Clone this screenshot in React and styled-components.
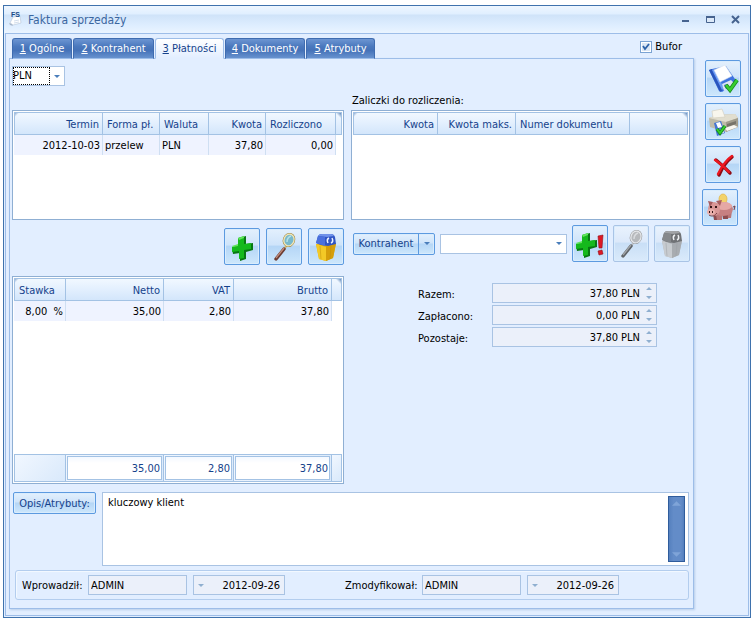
import React from "react";
import styled, { createGlobalStyle, css } from "styled-components";

const color = {
  window: "#3f72ad",
  panel: "#e2eeff",
  line: "#9dbde8",
  grid: "#8fafd3",
  cell: "#a3c2e4",
  field: "#a9c3e3",
  readOnly: "#ebf0fa",
  navy: "#15428b",
  button: "#5c9ae0",
};

const GlobalStyle = createGlobalStyle`
  * {
    box-sizing: border-box;
  }

  body {
    margin: 0;
    background: #fff;
    color: #000;
  }

  body, button, input, select, textarea {
    font-family: "DejaVu Sans Condensed", "DejaVu Sans", sans-serif;
    font-size: 11px;
    line-height: 14px;
  }
`;

// WINDOW
const Window = styled.div`
  background: ${color.panel};
  border: 1px solid ${color.window};
  margin: 5px 5px 2px 3px;
  padding: 0 1px 1px;
`;

const TitleBar = styled.header`
  align-items: center;
  background: linear-gradient(#eef6ff 0, #e0efff 8px, #cfe3f9 9px, #dfeeff 20px, #eaf4ff 27px);
  display: flex;
  height: 27px;
  margin: 0 -1px;
  padding: 0 7px 0 5px;
`;

const Title = styled.h1`
  color: #3b669f;
  flex: 1;
  font-size: 12px;
  font-weight: normal;
  line-height: 16px;
  margin: 0;
  padding-left: 4px;
`;

const WindowButton = styled.button`
  background: none;
  border: 0;
  display: flex;
  margin-left: 10px;
  padding: 2px;
`;

const Body = styled.div`
  border: 1px solid ${color.line};
  display: flex;
  padding: 4px 0 6px 3px;
`;

const Main = styled.div`
  flex: 1;
  min-width: 0;
`;

// TABS
const TabBar = styled.div`
  display: flex;
  justify-content: space-between;
  padding: 0 12px 0 3px;
`;

const Tabs = styled.div`
  display: flex;
  gap: 1px;
  margin-bottom: -1px;
`;

const Tab = styled.button`
  background: linear-gradient(#6c95d2, #4a78bd 40%, #4572b8 60%, #6792cf);
  border: 1px solid #3f6cb0;
  border-bottom: 1px solid ${color.line};
  border-radius: 3px 3px 0 0;
  color: #fff;
  height: 21px;
  padding: 1px 0 0;
  text-align: center;
  white-space: nowrap;
  width: ${props => props.$width}px;

  ${props => props.$active && css`
    background: linear-gradient(#fff, ${color.panel});
    border-color: ${color.line};
    border-bottom-color: ${color.panel};
    color: ${color.navy};
    position: relative;
  `}
`;

const Check = styled.label`
  align-items: center;
  display: flex;
  gap: 3px;
  height: 18px;

  input {
    appearance: none;
    background: #fff;
    border: 1px solid #7ba3d3;
    box-shadow: inset 0 0 0 1px #fff, inset 0 0 0 9px #dbe7f5;
    grid-area: 1 / 1;
    height: 12px;
    margin: 0;
    width: 12px;
  }

  span {
    display: grid;
    place-items: center;
  }

  svg {
    grid-area: 1 / 1;
    pointer-events: none;
    z-index: 1;
  }
`;

const Panel = styled.main`
  border: 1px solid ${color.line};
  box-shadow: 1px 1px 2px #b7cdea;
  padding: 7px 3px 8px 2px;
`;

const Columns = styled.div`
  display: grid;
  gap: 7px;
  grid-template-columns: minmax(0, 332fr) minmax(0, 339fr);
`;

const Column = styled.div`
  display: flex;
  flex-direction: column;
`;

// FIELDS
const Combo = styled.div`
  background: #fff;
  border: 1px solid ${color.field};
  display: grid;
  grid-template-columns: 1fr 14px;
  height: 20px;
  align-items: center;
  ${props => props.$width ? `width: ${props.$width}px;` : "flex: 1;"}

  select {
    appearance: none;
    background: none;
    border: 0;
    grid-area: 1 / 1 / 2 / 3;
    height: 18px;
    margin-right: 14px;
    outline: ${props => props.$focused ? "1px dotted #000" : "0"};
    outline-offset: -1px;
    padding: 0;
  }

  svg {
    grid-area: 1 / 2;
    justify-self: center;
    pointer-events: none;
  }
`;

const CurrencyBar = styled.div`
  display: flex;
  margin-bottom: 24px;
`;

const ReadOnly = styled.div`
  align-items: center;
  background: ${color.readOnly};
  border: 1px solid ${color.field};
  display: flex;
  height: 20px;
  padding: 0 4px 0 2px;
  width: ${props => props.$width}px;

  input {
    background: none;
    border: 0;
    flex: 1;
    height: 18px;
    min-width: 0;
    padding: 0;
    text-align: ${props => props.$right ? "right" : "left"};
  }
`;

// GRIDS
const GridBox = styled.div`
  background: #fff;
  border: 1px solid ${color.grid};
  min-height: ${props => props.$height}px;
  padding: 1px;
`;

const Table = styled.table`
  border-collapse: separate;
  border-spacing: 0;
  table-layout: fixed;
  width: 100%;

  th, td {
    overflow: hidden;
    text-align: left;
    white-space: pre;
  }

  th {
    background: linear-gradient(#f1f8ff, #e4f0fe 45%, #d3e6fb);
    border: 1px solid ${color.cell};
    border-left-width: 0;
    color: ${color.navy};
    font-weight: normal;
    height: 23px;
    padding: 2px 3px 0 4px;
  }

  th:first-child {
    background: linear-gradient(135deg, #8fabd0 0, #e4f0fe00 3px), linear-gradient(#f1f8ff, #e4f0fe 45%, #d3e6fb);
    border-left-width: 1px;
  }

  th:last-child {
    background: linear-gradient(225deg, #5f86b8 0, #e4f0fe00 4px), linear-gradient(#f1f8ff, #e4f0fe 45%, #d3e6fb);
  }

  tbody td {
    background: #eff3ff;
    border-right: 1px solid #cfdff2;
    height: 20px;
    padding: 2px 2px 0;
  }

  tbody td:last-child {
    background: #fff;
    border: 0;
  }

  tbody tr.space td {
    height: 133px;
  }

  th.right, td.right {
    text-align: right;
  }
`;

const FootCell = styled.td`
  background: linear-gradient(135deg, #f1f7ff, #d9e9fb);
  border: 1px solid ${color.cell};
  border-left-width: ${props => props.$first ? 1 : 0}px;
  height: 28px;
  padding: ${props => props.$sum ? 1 : 0}px;
`;

const Sum = styled.div`
  background: linear-gradient(#f3f8ff, #fff 6px);
  border: 1px solid ${color.cell};
  color: ${color.navy};
  height: 24px;
  line-height: 24px;
  padding-right: 1px;
  text-align: right;
`;

// BUTTONS
const glass = css`
  background: linear-gradient(#e3f0fd, #cfe4fa 45%, #b5d6f6 50%, #cde7fc);
  border: 1px solid ${color.button};
  border-radius: 2px;
  box-shadow: inset 0 0 0 1px #d9ecfd;
`;

const IconButton = styled.button`
  ${glass}
  align-items: center;
  display: flex;
  flex: none;
  height: 37px;
  justify-content: center;
  padding: 0;
  width: 36px;
  ${props => props.$start && "align-self: flex-start;"}

  &:disabled {
    border-color: #a9c4e6;
    background: linear-gradient(#e9f2fd, #dce9fa 45%, #c9dff6 50%, #daeafb);
  }

  &:disabled svg {
    filter: grayscale(1);
    opacity: 0.8;
  }
`;

const TextButton = styled.button`
  ${glass}
  color: ${color.navy};
  flex: none;
  height: 22px;
  padding: 1px 0 0;
  white-space: nowrap;
  width: ${props => props.$width}px;
`;

const SplitButton = styled.div`
  ${glass}
  display: flex;
  flex: none;
  height: 22px;
  width: 82px;

  button {
    align-items: center;
    background: none;
    border: 0;
    color: ${color.navy};
    display: flex;
    justify-content: center;
    padding: 0;
  }

  button:first-child {
    flex: 1;
  }

  button:last-child {
    border-left: 1px solid ${color.button};
    width: 16px;
  }
`;

const ButtonRow = styled.div`
  display: flex;
  gap: 6px;
  justify-content: flex-end;
  margin: 8px 0 11px;
`;

const AdvanceRow = styled.div`
  align-items: center;
  display: flex;
  gap: 5px;
  margin: 5px 0 21px;
  padding-left: 2px;
`;

const GridLabel = styled.div`
  line-height: 16px;
  margin: 27px 0 1px;
  padding-left: 1px;
`;

const Totals = styled.div`
  display: grid;
  row-gap: 2px;
  grid-template-columns: 74px 165px;
  justify-content: end;
  padding-right: 33px;

  label {
    line-height: 24px;
    height: 20px;
  }
`;

const Description = styled.div`
  display: flex;
  gap: 6px;
  padding: 8px 1px 0;
`;

const TextBox = styled.div`
  background: #fff;
  border: 1px solid ${color.field};
  display: flex;
  flex: 1;
  height: 74px;
  padding: 3px;

  textarea {
    border: 0;
    flex: 1;
    outline: 0;
    overflow: hidden;
    padding: 0 2px;
    resize: none;
  }
`;

const ScrollBar = styled.div`
  align-items: center;
  background: linear-gradient(90deg, #5580be, #638cc8 30%, #638cc8 80%, #5580be);
  border: 1px solid #2f5c9c;
  display: flex;
  flex-direction: column;
  justify-content: space-between;
  padding: 4px 0;
  width: 17px;
`;

const Audit = styled.div`
  align-items: center;
  border: 1px solid #b3cdee;
  border-radius: 3px;
  box-shadow: inset 1px 1px 1px #f4f9ff;
  display: flex;
  gap: 6px;
  height: 30px;
  margin: 4px 1px 0 3px;
  padding-left: 6px;

  label {
    padding-top: 1px;
    width: 60px;
  }

  label.modified {
    margin-left: 54px;
    width: 71px;
  }
`;

const SideBar = styled.aside`
  align-items: flex-end;
  display: flex;
  flex-direction: column;
  gap: 6px;
  padding: 22px 7px 0 8px;
  width: 54px;
`;

// ICONS
const Arrow = ({ up, fill = "#4a7ebb", size = 6 }) => (
  <svg width={size} height={Math.ceil(size / 2)} viewBox="0 0 6 3">
    <path d={up ? "M0 3h6L3 0z" : "M0 0h6L3 3z"} fill={fill} />
  </svg>
);

const Spinner = () => (
  <svg width="12" height="18" viewBox="0 0 12 18" fill="#8fafd0">
    <path d="M6 6h6L9 3zM6 12h6L9 15z" />
  </svg>
);

const FsIcon = () => (
  <svg width="15" height="17" viewBox="0 0 15 17">
    <path d="M4 6l7-1 1 7-8 2-3-2z" fill="#fff" stroke="#b6c4d8" strokeWidth=".6" />
    <path d="M0 12l3 1 1 2-3-1z" fill="#aab9cc" />
    <path d="M5 10l5-1M5 12l5-1" stroke="#d3deec" />
    <text x="2" y="6" fontFamily="Liberation Sans" fontSize="7" fontWeight="bold" fill="#1c4c86">FS</text>
  </svg>
);

const SaveIcon = () => (
  <svg width="32" height="32" viewBox="0 0 32 32">
    <path d="M2 7l3-1L19 3l11 16-15 10-3-1z" fill="#3f74e0" />
    <path d="M2 7l3-1 11 21-3 2z" fill="#2a55bd" />
    <path d="M5 7l2-1 10 19-2 2z" fill="#6b9bf6" />
    <path d="M7 7l11-5 7 11-12 6z" fill="#fff" stroke="#d5e0f0" strokeWidth=".6" />
    <path d="M15 21l9-4 4 4-11 7z" fill="#dce4f2" />
    <path d="M17 22l3-1 2 4-3 1z" fill="#2b57b8" />
    <path d="M19 22l4 5 7-10" fill="none" stroke="#178a1b" strokeWidth="4" />
    <path d="M19 22l4 5 7-10" fill="none" stroke="#38ce2f" strokeWidth="2.400" />
  </svg>
);

const PrinterIcon = () => (
  <svg width="32" height="32" viewBox="0 0 32 32">
    <path d="M2 12l8-3 18-1 3 4v9l-12 5-16-5z" fill="#bfbba9" />
    <path d="M2 12l8-3 18-1 3 4-12 4z" fill="#e1decf" />
    <path d="M5 5l10-2 3 8-12 1z" fill="#f8f6ed" stroke="#d1cdbc" strokeWidth=".6" />
    <path d="M19 16l12-4v9l-12 5z" fill="#a19d8d" />
    <path d="M20 18l9-3v3l-9 3z" fill="#77746a" />
    <path d="M18 22l9-3 4 2-11 4z" fill="#f9f8f1" />
    <path d="M7 17l7-2 4 12-8 3z" fill="#4474d4" />
    <path d="M9 17l4-1 2 5-4 1z" fill="#fff" />
    <path d="M11 24l5-1 1 4-5 1z" fill="#e4ebf6" />
    <path d="M10 23l3 4 5-7" fill="none" stroke="#168b1b" strokeWidth="3.400" />
    <path d="M10 23l3 4 5-7" fill="none" stroke="#37cf2d" strokeWidth="1.700" />
  </svg>
);

const CrossIcon = () => (
  <svg width="32" height="32" viewBox="0 0 32 32" fill="none">
    <path d="M9 11c4 3 9 8 14 13M25 8c-5 4-10 11-13 18" stroke="#8d0b14" strokeWidth="3.400" strokeLinecap="round" />
    <path d="M8 11c4 2 9 7 14 12M25 7c-6 4-11 12-14 18" stroke="#ed171f" strokeWidth="2.400" strokeLinecap="round" />
  </svg>
);

const PigIcon = () => (
  <svg width="34" height="34" viewBox="0 0 34 34">
    <ellipse cx="20" cy="8" rx="4" ry="5" fill="#f3d36a" stroke="#dfb548" strokeWidth=".7" />
    <path d="M10 23h5v6h-4zM19 22h7l-1 6h-5z" fill="#8d4c4f" />
    <path d="M13 24h6v5h-5zM24 20h5l-1 7h-3z" fill="#b97677" />
    <ellipse cx="20" cy="18" rx="10" ry="7" fill="#c78081" />
    <ellipse cx="21" cy="15" rx="8" ry="4" fill="#e5a8a5" />
    <ellipse cx="11" cy="18" rx="6" ry="7" fill="#d99796" />
    <path d="M5 10l5 1-3 5zM13 10l6-1-2 6z" fill="#a75d60" />
    <ellipse cx="8" cy="21" rx="4" ry="3" fill="#e9afab" />
    <path d="M7 15h2v2H7zM12 15h2v2h-2zM6 20h1v2H6zM9 20h1v2H9z" fill="#361618" />
    <path d="M6 24c3 2 6 1 8-2M30 16l2-1-1 4" fill="none" stroke="#793d42" />
  </svg>
);

const PlusIcon = ({ alert }) => (
  <svg width="32" height="32" viewBox="0 0 32 32">
    <g transform={alert ? "translate(-3 -1)" : "translate(1 -1)"}>
      <path d="M12 8l7-2v8l7-1v7l-7 2v7l-6 2v-8l-7 1-1-6 7-2z" fill="#087713" />
      <path d="M11 8l6-2v8l7-1v6l-7 1v8l-5 1v-8l-7 1v-5l6-2z" fill="#15b91c" />
      <path d="M11 8l6-2v2l-5 2zM5 16l6-2v2l-5 1z" fill="#61e45b" />
    </g>
    {alert && <path d="M24 8l5-1-1 13h-3zM24 23l4-1 1 4-4 1z" fill="#dc1823" stroke="#930d18" strokeWidth=".6" />}
  </svg>
);

const LensIcon = () => (
  <svg width="32" height="32" viewBox="0 0 32 32">
    <path d="M16 18l4-5" stroke="#cfbb72" strokeWidth="2" />
    <path d="M8 28l8-10" stroke="#6b3b31" strokeWidth="3.400" strokeLinecap="round" />
    <path d="M8 27l8-10" stroke="#c08c7c" strokeWidth="1.300" />
    <ellipse cx="21" cy="9" rx="5" ry="6" transform="rotate(20 21 9)" fill="#79b9cb" stroke="#9b853f" strokeWidth="2.400" />
    <ellipse cx="21" cy="9" rx="5" ry="6" transform="rotate(20 21 9)" fill="#79b9cb" stroke="#f3e7b8" strokeWidth="1.300" />
    <path d="M19 11c0-3 1-5 4-6" fill="none" stroke="#b5e1e7" strokeWidth="1.500" />
  </svg>
);

const BinIcon = () => (
  <svg width="32" height="32" viewBox="0 0 32 32">
    <path d="M6 13h20l-3 14-7 3-7-2z" fill="#dfab0e" />
    <path d="M6 13l10 3v14l-7-2z" fill="#f3c926" />
    <path d="M16 15l10-3-3 15-7 3z" fill="#d59e0b" />
    <path d="M10 15l1 13M21 15l-1 13" stroke="#bd8d0c" strokeWidth=".8" opacity=".6" />
    <path d="M6 12l2-7q1-2 4-2h9q3 0 4 3l1 7-8 2-7-1z" fill="#2f55c4" />
    <path d="M8 5q1-2 4-2h9q2 0 3 2l-7 1z" fill="#6f92ea" />
    <path d="M6 12l2-7 7 1v9z" fill="#4a70dd" />
    <path d="M19 7c-2 1-2 3-1 5M21 12c2-1 2-3 1-5" fill="none" stroke="#eef3ff" strokeWidth="1.500" />
  </svg>
);

const tabs = [
  { key: "1", name: "Ogólne", width: 60 },
  { key: "2", name: "Kontrahent", width: 81 },
  { key: "3", name: "Płatności", width: 69, active: true },
  { key: "4", name: "Dokumenty", width: 80 },
  { key: "5", name: "Atrybuty", width: 69 },
];

const totals = [
  { id: "razem", label: "Razem:", value: "37,80 PLN" },
  { id: "zaplacono", label: "Zapłacono:", value: "0,00 PLN" },
  { id: "pozostaje", label: "Pozostaje:", value: "37,80 PLN" },
];

const paymentColumns = [
  { name: "Termin", width: 89, right: true },
  { name: "Forma pł.", width: 57 },
  { name: "Waluta", width: 49 },
  { name: "Kwota", width: 57, right: true },
  { name: "Rozliczono", width: 70, rightCell: true },
  { name: "", width: 6 },
];

const advanceColumns = [
  { name: "Kwota", width: 85, right: true },
  { name: "Kwota maks.", width: 78, right: true },
  { name: "Numer dokumentu", width: 114 },
  { name: "", width: 58 },
];

const vatColumns = [
  { name: "Stawka", width: 52, rightCell: true },
  { name: "Netto", width: 98, right: true },
  { name: "VAT", width: 70, right: true },
  { name: "Brutto", width: 98, right: true },
  { name: "", width: 10 },
];

const Grid = ({ columns, rows = [], sums, height }) => (
  <GridBox $height={height}>
    <Table>
      <colgroup>
        {columns.map((c, i) => <col key={i} width={c.width} />)}
      </colgroup>
      <thead>
        <tr>
          {columns.map((c, i) => (
            <th key={i} className={c.right ? "right" : ""}>{c.name}</th>
          ))}
        </tr>
      </thead>
      <tbody>
        {rows.map((row, r) => (
          <tr key={r}>
            {columns.map((c, i) => (
              <td key={i} className={c.right || c.rightCell ? "right" : ""}>{row[i]}</td>
            ))}
          </tr>
        ))}
        {sums && <tr className="space"><td colSpan={columns.length} /></tr>}
      </tbody>
      {sums && (
        <tfoot>
          <tr>
            {sums.map((sum, i) => (
              <FootCell key={i} $first={i === 0} $sum={!!sum}>
                {sum && <Sum>{sum}</Sum>}
              </FootCell>
            ))}
          </tr>
        </tfoot>
      )}
    </Table>
  </GridBox>
);

const DateField = ({ label, value }) => (
  <ReadOnly $width={92} $right>
    <svg width="9" height="5" viewBox="0 0 9 5"><path d="M2 1h6L5 4z" fill="#8fafd0" /></svg>
    <input readOnly aria-label={label} value={value} />
  </ReadOnly>
);

const App = () => (
  <>
    <GlobalStyle />
    <Window>
      <TitleBar>
        <FsIcon />
        <Title>Faktura sprzedaży</Title>
        <WindowButton aria-label="Minimalizuj">
          <svg width="11" height="9"><path d="M2 5h7v2H2z" fill="#46638f" /></svg>
        </WindowButton>
        <WindowButton aria-label="Maksymalizuj">
          <svg width="11" height="9"><path d="M1.500 1.500h8v6h-8z" fill="#dce9f8" stroke="#46638f" /><path d="M1 1h9v2H1z" fill="#46638f" /></svg>
        </WindowButton>
        <WindowButton aria-label="Zamknij">
          <svg width="11" height="9"><path d="M2 1l7 7M9 1L2 8" stroke="#46638f" strokeWidth="2" /></svg>
        </WindowButton>
      </TitleBar>
      <Body>
        <Main>
          <TabBar>
            <Tabs role="tablist">
              {tabs.map(t => (
                <Tab key={t.key} role="tab" aria-selected={!!t.active} $active={t.active} $width={t.width}>
                  <u>{t.key}</u> {t.name}
                </Tab>
              ))}
            </Tabs>
            <Check>
              <span>
                <input type="checkbox" defaultChecked />
                <svg width="8" height="8" viewBox="0 0 8 8"><path d="M1 3l2 3 4-5" fill="none" stroke="#2d62a8" strokeWidth="1.800" /></svg>
              </span>
              Bufor
            </Check>
          </TabBar>
          <Panel>
            <Columns>
              <Column>
                <CurrencyBar>
                  <Combo $width={53} $focused>
                    <select aria-label="Waluta" defaultValue="PLN">
                      <option>PLN</option>
                    </select>
                    <Arrow />
                  </Combo>
                </CurrencyBar>
                <Grid
                  columns={paymentColumns}
                  rows={[["2012-10-03", "przelew", "PLN", "37,80", "0,00", ""]]}
                  height={110}
                />
                <ButtonRow>
                  <IconButton aria-label="Dodaj"><PlusIcon /></IconButton>
                  <IconButton aria-label="Podgląd"><LensIcon /></IconButton>
                  <IconButton aria-label="Usuń"><BinIcon /></IconButton>
                </ButtonRow>
                <Grid
                  columns={vatColumns}
                  rows={[["8,00  %", "35,00", "2,80", "37,80", ""]]}
                  sums={["", "35,00", "2,80", "37,80", ""]}
                  height={208}
                />
              </Column>
              <Column>
                <GridLabel>Zaliczki do rozliczenia:</GridLabel>
                <Grid columns={advanceColumns} height={110} />
                <AdvanceRow>
                  <SplitButton>
                    <button>Kontrahent</button>
                    <button aria-label="Rozwiń"><Arrow /></button>
                  </SplitButton>
                  <Combo>
                    <select aria-label="Kontrahent" defaultValue="">
                      <option value="" />
                    </select>
                    <Arrow />
                  </Combo>
                  <IconButton aria-label="Dodaj zaliczkę"><PlusIcon alert /></IconButton>
                  <IconButton aria-label="Podgląd zaliczki" disabled><LensIcon /></IconButton>
                  <IconButton aria-label="Usuń zaliczkę" disabled><BinIcon /></IconButton>
                </AdvanceRow>
                <Totals>
                  {totals.map(t => (
                    <React.Fragment key={t.id}>
                      <label htmlFor={t.id}>{t.label}</label>
                      <ReadOnly $width={165} $right>
                        <input id={t.id} readOnly value={t.value} />
                        <Spinner />
                      </ReadOnly>
                    </React.Fragment>
                  ))}
                </Totals>
              </Column>
            </Columns>
            <Description>
              <TextButton $width={83}>Opis/Atrybuty:</TextButton>
              <TextBox>
                <textarea aria-label="Opis" defaultValue="kluczowy klient" />
                <ScrollBar>
                  <Arrow up size={9} fill="#7fa4d8" />
                  <Arrow size={9} fill="#7fa4d8" />
                </ScrollBar>
              </TextBox>
            </Description>
            <Audit>
              <label htmlFor="created">Wprowadził:</label>
              <ReadOnly $width={99}><input id="created" readOnly value="ADMIN" /></ReadOnly>
              <DateField label="Data wprowadzenia" value="2012-09-26" />
              <label className="modified" htmlFor="modified">Zmodyfikował:</label>
              <ReadOnly $width={99}><input id="modified" readOnly value="ADMIN" /></ReadOnly>
              <DateField label="Data modyfikacji" value="2012-09-26" />
            </Audit>
          </Panel>
        </Main>
        <SideBar>
          <IconButton aria-label="Zapisz"><SaveIcon /></IconButton>
          <IconButton aria-label="Drukuj"><PrinterIcon /></IconButton>
          <IconButton aria-label="Anuluj"><CrossIcon /></IconButton>
          <IconButton aria-label="Płatność" $start><PigIcon /></IconButton>
        </SideBar>
      </Body>
    </Window>
  </>
);

export default App;
